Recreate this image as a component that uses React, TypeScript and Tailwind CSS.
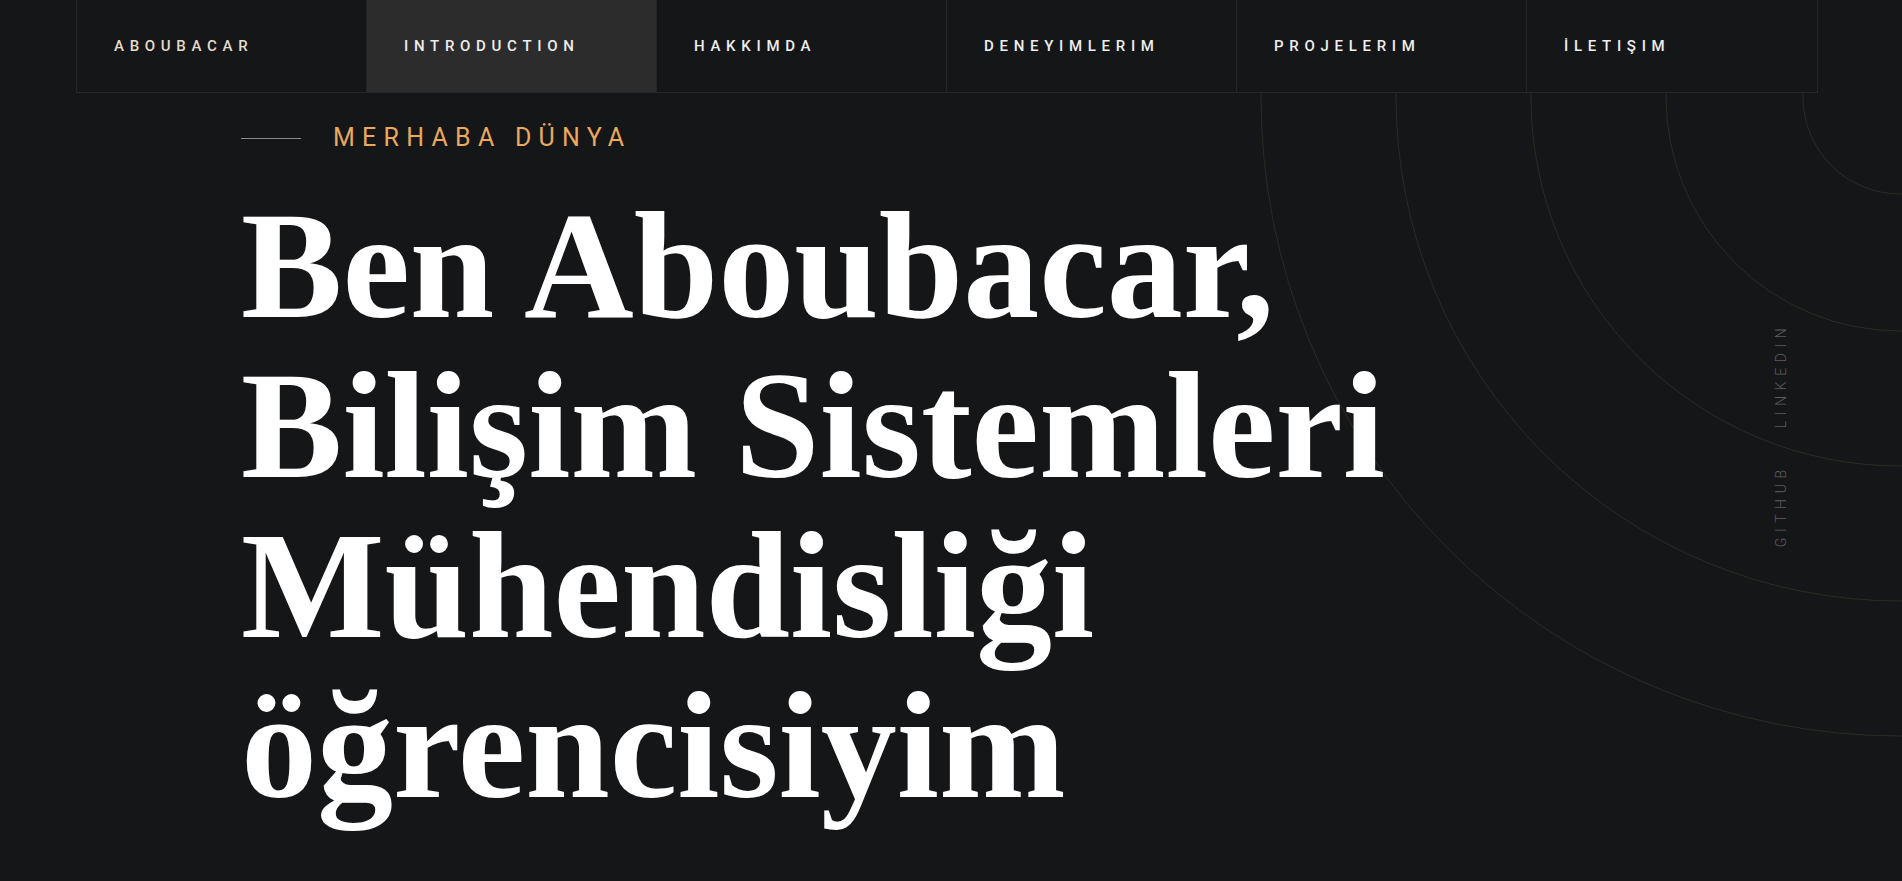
import React from "react";

const navItems = [
  { label: "ABOUBACAR", href: "#", brand: true },
  { label: "INTRODUCTION", href: "#intro", active: true },
  { label: "HAKKIMDA", href: "#hakkimda" },
  { label: "DENEYIMLERIM", href: "#deneyimlerim" },
  { label: "PROJELERIM", href: "#projelerim" },
  { label: "İLETIŞIM", href: "#iletisim" },
];

// rings around the top-right corner
const rings = [97, 234, 369, 504, 639];

export default function App() {
  return (
    <div className="h-screen overflow-y-scroll bg-[#151618] font-['Roboto',sans-serif] [&::-webkit-scrollbar]:w-2 [&::-webkit-scrollbar-track]:bg-[#f1f1f1] [&::-webkit-scrollbar-thumb]:bg-[#c1c1c1]">
      <section id="intro" className="relative h-[881px] overflow-hidden">
        <svg className="absolute right-0 top-[93px]" width="700" height="788" viewBox="0 0 700 788" fill="none">
          {rings.map((r) => (
            <circle key={r} cx={698} cy={4} r={r} stroke="#2b2a24" strokeWidth="1" />
          ))}
        </svg>

        <nav className="relative z-10 ml-[76px] grid w-[1742px] grid-cols-6 border-x border-b border-[#25262a]">
          {navItems.map((item) => (
            <a
              key={item.label}
              href={item.href}
              className={
                "flex h-[92px] items-center border-r border-[#25262a] pl-[37px] text-[15px] font-medium tracking-[0.38em] last:border-r-0 " +
                (item.active ? "bg-[#2c2c2d] " : "") +
                (item.brand ? "text-[#e6dccb]" : "text-[#eeeeee]")
              }
            >
              {item.label}
            </a>
          ))}
        </nav>

        <div className="relative z-10 pl-[241px] pt-[27px]">
          <div className="flex items-center gap-8 leading-9">
            <span className="h-px w-[60px] bg-[#8a8a8a]" />
            <p className="text-[25px] tracking-[0.29em] text-[#eaa95c]">MERHABA DÜNYA</p>
          </div>
          <h1 className="mt-[30px] font-['Liberation_Serif',serif] text-[152px] font-bold leading-[160px] text-white">
            Ben Aboubacar,
            <br />
            Bilişim Sistemleri
            <br />
            Mühendisliği
            <br />
            öğrencisiyim
          </h1>
        </div>

        <div className="absolute right-[111px] top-[calc(50%-6px)] z-10 flex -translate-y-1/2 rotate-180 gap-9 text-[14px] font-light leading-5 tracking-[0.4em] text-[#5e5e5e] [writing-mode:vertical-rl]">
          <a href="#">GITHUB</a>
          <a href="#">LINKEDIN</a>
        </div>
      </section>

      <section id="hakkimda" className="h-[1800px]" />
      <section id="deneyimlerim" className="h-[1800px]" />
      <section id="projelerim" className="h-[1800px]" />
      <section id="iletisim" className="h-[1800px]" />
    </div>
  );
}
